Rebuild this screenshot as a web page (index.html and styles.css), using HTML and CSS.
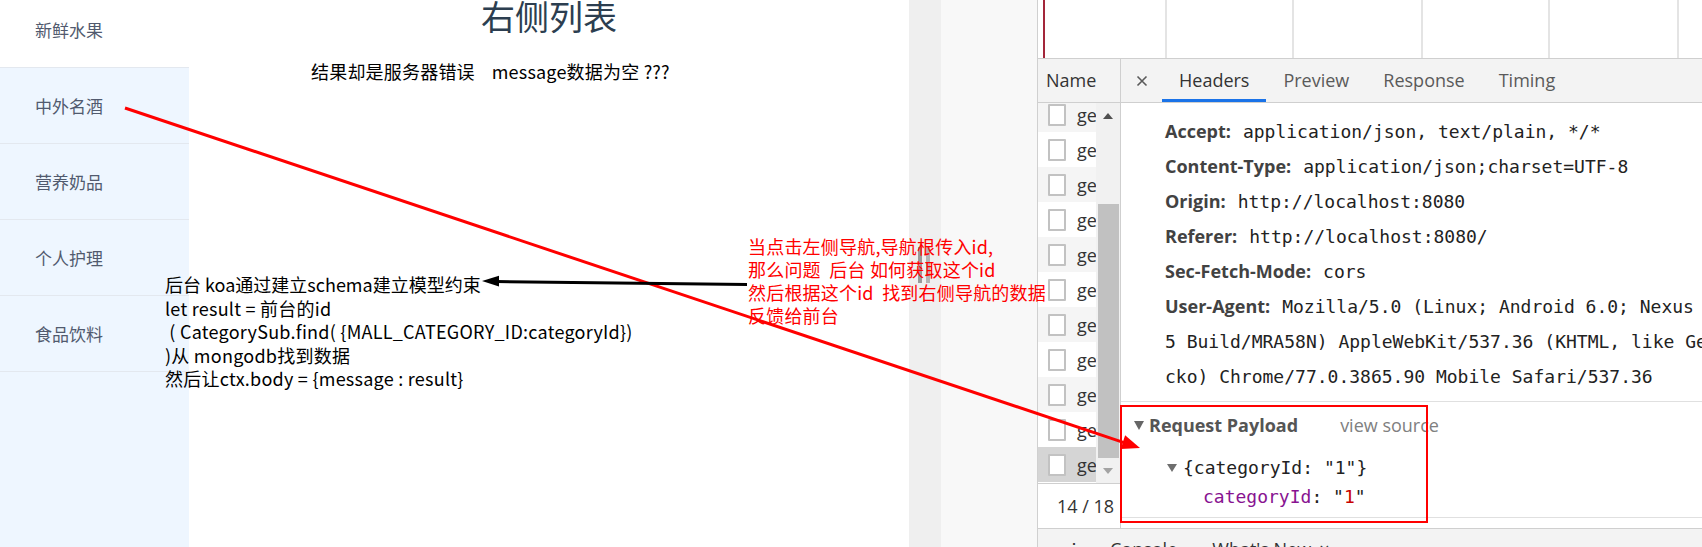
FILE: index.html
```html
<!DOCTYPE html>
<html lang="zh-CN">
<head>
<meta charset="utf-8">
<title>右侧列表</title>
<link rel="stylesheet" href="styles.css">
</head>
<body>
<div class="screen">
  <div class="app">
    <nav class="sidebar">
      <div class="nav-list">
        <div class="nav-item active">新鲜水果</div>
        <div class="nav-item">中外名酒</div>
        <div class="nav-item">营养奶品</div>
        <div class="nav-item">个人护理</div>
        <div class="nav-item">食品饮料</div>
      </div>
    </nav>
    <main class="content">
      <h1 class="title">右侧列表</h1>
      <p class="msg">结果却是服务器错误    message数据为空 ???</p>
    </main>
  </div>

  <div class="gutter">
    <div class="gutter-a"><div class="grip"><span class="grip-bar"></span><span class="grip-bar light"></span></div></div>
    <div class="gutter-b"></div>
  </div>

  <section class="devtools">
    <div class="overview">
      <div class="ov-cell w129"></div>
      <div class="ov-cell w127"></div>
      <div class="ov-cell w129"></div>
      <div class="ov-cell w127"></div>
      <div class="ov-cell w129"></div>
      <div class="marker"></div>
    </div>
    <div class="panel">
      <div class="names">
        <div class="names-head">Name</div>
        <div class="names-body">
          <div class="rows">
            <div class="row alt"><span class="cb"></span><span class="row-name">getCategorySubList</span></div>
            <div class="row"><span class="cb"></span><span class="row-name">getCategorySubList</span></div>
            <div class="row alt"><span class="cb"></span><span class="row-name">getCategorySubList</span></div>
            <div class="row"><span class="cb"></span><span class="row-name">getCategorySubList</span></div>
            <div class="row alt"><span class="cb"></span><span class="row-name">getCategorySubList</span></div>
            <div class="row"><span class="cb"></span><span class="row-name">getCategorySubList</span></div>
            <div class="row alt"><span class="cb"></span><span class="row-name">getCategorySubList</span></div>
            <div class="row"><span class="cb"></span><span class="row-name">getCategorySubList</span></div>
            <div class="row alt"><span class="cb"></span><span class="row-name">getCategorySubList</span></div>
            <div class="row"><span class="cb"></span><span class="row-name">getCategorySubList</span></div>
            <div class="row sel"><span class="cb"></span><span class="row-name">getCategorySubList</span></div>
          </div>
          <div class="scrollbar">
            <div class="sb-btn"><span class="arr-up"></span></div>
            <div class="sb-gap"></div>
            <div class="sb-thumb"></div>
            <div class="sb-btn down"><span class="arr-down"></span></div>
          </div>
        </div>
        <div class="names-status">14 / 18</div>
      </div>
      <div class="details">
        <div class="tabs">
          <div class="tab-close"><svg width="12" height="12" viewBox="0 0 12 12"><path d="M1.5 1.5 L10.5 10.5 M10.5 1.5 L1.5 10.5" stroke="#5a5a5a" stroke-width="1.6" fill="none"/></svg></div>
          <div class="tab active">Headers</div>
          <div class="tab">Preview</div>
          <div class="tab">Response</div>
          <div class="tab">Timing</div>
        </div>
        <div class="headers">
          <div class="hline"><span class="hk">Accept:</span><span class="hv">application/json, text/plain, */*</span></div>
          <div class="hline"><span class="hk">Content-Type:</span><span class="hv">application/json;charset=UTF-8</span></div>
          <div class="hline"><span class="hk">Origin:</span><span class="hv">http://localhost:8080</span></div>
          <div class="hline"><span class="hk">Referer:</span><span class="hv">http://localhost:8080/</span></div>
          <div class="hline"><span class="hk">Sec-Fetch-Mode:</span><span class="hv">cors</span></div>
          <div class="hline"><span class="hk">User-Agent:</span><span class="hv">Mozilla/5.0 (Linux; Android 6.0; Nexus</span></div>
          <div class="hline"><span class="hv cont">5 Build/MRA58N) AppleWebKit/537.36 (KHTML, like Ge</span></div>
          <div class="hline"><span class="hv cont">cko) Chrome/77.0.3865.90 Mobile Safari/537.36</span></div>
        </div>
        <div class="payload">
          <div class="payload-head"><span class="tri"></span><span class="ph-title">Request Payload</span><span class="view-src">view source</span></div>
          <div class="tree">
            <div class="tree-line"><span class="tri small"></span>{categoryId: "1"}</div>
            <div class="tree-line child"><span class="pk">categoryId</span>: "<span class="pv">1</span>"</div>
          </div>
        </div>
      </div>
    </div>
    <div class="drawer"><span class="dr-menu">⋮</span><span class="dr-console">Console</span><span class="dr-new">What's New</span><span class="dr-x">×</span></div>
  </section>

  <div class="annot">
    <svg class="annot-svg" width="1702" height="547" viewBox="0 0 1702 547">
      <line x1="125" y1="108" x2="1124" y2="442.6" stroke="#ff0000" stroke-width="3"/>
      <polygon points="1140,448 1125.1,435.2 1120.7,448.9" fill="#ff0000"/>
      <line x1="747" y1="284.5" x2="496" y2="281.5" stroke="#000" stroke-width="3"/>
      <polygon points="482,281 499,275.8 499,286.4" fill="#000"/>
      <rect x="1121" y="406" width="306" height="116" fill="none" stroke="#ff0000" stroke-width="2"/>
    </svg>
    <div class="note-black"><span class="ls0">后台 koa通过建立schema建立模型约束</span>
let result = 前台的id
 ( CategorySub.find( {MALL_CATEGORY_ID:categoryId})
)从 mongodb找到数据
然后让ctx.body = {message : result}</div>
    <div class="note-red">当点击左侧导航,导航根传入id,
那么问题  后台 如何获取这个id
然后根据这个id  找到右侧导航的数据
反馈给前台</div>
  </div>
</div>
</body>
</html>
```

FILE: styles.css
```css
* { box-sizing: border-box; }
html, body { margin: 0; padding: 0; }
body {
  width: 1702px;
  height: 547px;
  overflow: hidden;
  background: #fff;
  font-family: "Noto Sans CJK SC", "Noto Sans", sans-serif;
}
.screen {
  position: relative;
  display: flex;
  width: 1702px;
  height: 547px;
  overflow: hidden;
}

/* ---------- page ---------- */
.app { display: flex; width: 909px; flex: none; }
.sidebar { width: 189px; flex: none; background: #eef6ff; }
.nav-list { margin-top: -8px; }
.nav-item {
  height: 76px;
  border-bottom: 1px solid #e3e8ef;
  padding-left: 35px;
  display: flex;
  align-items: center;
  font-size: 17px;
  color: #515a6e;
}
.nav-item.active { background: #fff; }
.content { flex: 1; min-width: 0; }
.title {
  margin: -1px 0 0;
  font-size: 34px;
  line-height: 34px;
  font-weight: normal;
  color: #2c3e50;
  text-align: center;
}
.msg {
  margin: 26px 0 0 122px;
  font-size: 18px;
  line-height: 24px;
  letter-spacing: 0.2px;
  color: #000;
  white-space: pre;
}

/* ---------- gutter ---------- */
.gutter { display: flex; width: 128px; flex: none; }
.gutter-a { width: 32px; background: #efefef; padding: 247px 0 0 9px; }
.gutter-b { flex: 1; background: #f8f8f8; }
.grip { display: flex; gap: 4px; }
.grip-bar { width: 4px; height: 36px; background: #9a9a9a; }
.grip-bar.light { background: #b4b4b4; }

/* ---------- devtools ---------- */
.devtools {
  flex: 1;
  min-width: 0;
  border-left: 1px solid #d0d0d0;
  display: flex;
  flex-direction: column;
  overflow: hidden;
  font-family: "Open Sans", "Noto Sans", sans-serif;
}
.overview {
  position: relative;
  flex: none;
  height: 59px;
  display: flex;
  border-bottom: 1px solid #cfcfcf;
  background: #fff;
}
.ov-cell { flex: none; border-right: 2px solid #e4e4e4; }
.w129 { width: 129px; }
.w127 { width: 127px; }
.marker {
  position: absolute;
  left: 5px;
  top: 0;
  bottom: 0;
  width: 2px;
  background: #a3263a;
}
.panel { display: flex; flex: none; height: 469px; }

.names {
  width: 83px;
  flex: none;
  border-right: 1px solid #cfcfcf;
  display: flex;
  flex-direction: column;
}
.names-head {
  height: 44px;
  flex: none;
  background: #f3f3f3;
  border-bottom: 1px solid #cfcfcf;
  padding-left: 8px;
  font-size: 18px;
  line-height: 43px;
  color: #333;
}
.names-body { height: 380px; flex: none; display: flex; overflow: hidden; }
.rows { width: 58px; flex: none; margin-top: -6px; overflow: hidden; }
.row {
  height: 35px;
  display: flex;
  align-items: center;
  padding-left: 10px;
  background: #fff;
  overflow: hidden;
}
.row.alt { background: #f5f5f5; }
.row.sel { background: #d5d5d5; }
.cb {
  width: 18px;
  height: 22px;
  flex: none;
  border: 2px solid #c2c2c2;
  border-radius: 1px;
  background: #fff;
}
.row-name {
  margin-left: 11px;
  font-size: 18px;
  color: #333;
  white-space: nowrap;
}
.scrollbar {
  width: 24px;
  flex: none;
  background: #f1f1f1;
  display: flex;
  flex-direction: column;
}
.sb-btn { height: 26px; flex: none; display: flex; align-items: center; justify-content: center; }
.sb-btn.down { height: 25px; }
.sb-gap { height: 75px; flex: none; }
.sb-thumb { height: 254px; flex: none; margin: 0 1px 0 2px; background: #c1c1c1; }
.arr-up {
  width: 0; height: 0;
  border-left: 5px solid transparent;
  border-right: 5px solid transparent;
  border-bottom: 6px solid #505050;
}
.arr-down {
  width: 0; height: 0;
  border-left: 5px solid transparent;
  border-right: 5px solid transparent;
  border-top: 6px solid #a3a3a3;
}
.names-status {
  height: 45px;
  flex: none;
  border-top: 1px solid #cfcfcf;
  padding-left: 19px;
  font-size: 18px;
  line-height: 44px;
  color: #333;
}

.details { flex: 1; min-width: 0; display: flex; flex-direction: column; overflow: hidden; }
.tabs {
  height: 44px;
  flex: none;
  display: flex;
  background: #f3f3f3;
  border-bottom: 1px solid #cfcfcf;
}
.tab-close { width: 41px; display: flex; align-items: center; justify-content: center; padding-top: 1px; }
.tab {
  padding: 0 17px;
  font-size: 18px;
  line-height: 43px;
  color: #5a5a5a;
}
.tab.active { color: #333; box-shadow: inset 0 -3px 0 #1a73e8; }

.headers {
  height: 299px;
  flex: none;
  padding: 11px 0 0 44px;
  border-bottom: 1px solid #e0e0e0;
}
.hline { height: 35px; line-height: 35px; white-space: nowrap; }
.hk { font-weight: bold; font-size: 18px; color: #424242; }
.hv {
  margin-left: 12px;
  font-family: "DejaVu Sans Mono", "Liberation Mono", monospace;
  font-size: 18px;
  color: #222;
}
.hv.cont { margin-left: 0; }

.payload {
  height: 116px;
  flex: none;
  border-bottom: 1px solid #e0e0e0;
}
.payload-head {
  height: 46px;
  display: flex;
  align-items: center;
  padding-left: 13px;
}
.tri {
  width: 0; height: 0;
  border-left: 5.5px solid transparent;
  border-right: 5.5px solid transparent;
  border-top: 9px solid #666;
  margin-right: 5px;
}
.ph-title { font-weight: bold; font-size: 18px; color: #555; }
.view-src { margin-left: 42px; font-size: 18px; color: #808080; }
.tree { padding: 5px 0 0 46px; }
.tree-line {
  height: 29px;
  display: flex;
  align-items: center;
  white-space: pre;
  font-family: "DejaVu Sans Mono", "Liberation Mono", monospace;
  font-size: 18px;
  color: #222;
}
.tri.small {
  border-left-width: 5px;
  border-right-width: 5px;
  border-top-width: 8px;
  border-top-color: #6e6e6e;
  margin-right: 6px;
}
.tree-line.child { padding-left: 36px; }
.pk { color: #881391; }
.pv { color: #c80000; }

.drawer {
  height: 60px;
  flex: none;
  border-top: 1px solid #cfcfcf;
  background: #f3f3f3;
  padding-left: 27px;
  font-size: 18px;
  line-height: 40px;
  color: #333;
  white-space: nowrap;
}
.dr-console { margin-left: 27px; }
.dr-new { margin-left: 35px; }
.dr-x { margin-left: 8px; }

/* ---------- annotations ---------- */
.annot { position: absolute; left: 0; top: 0; width: 1702px; height: 547px; pointer-events: none; }
.annot-svg { position: absolute; left: 0; top: 0; }
.note-black {
  position: absolute;
  left: 165px;
  top: 273px;
  font-size: 18px;
  line-height: 23.5px;
  letter-spacing: 0.25px;
  color: #000;
  white-space: pre;
}
.note-black .ls0 { letter-spacing: 0; }
.note-red {
  position: absolute;
  left: 748px;
  top: 234.5px;
  font-size: 18px;
  line-height: 23px;
  letter-spacing: 0.2px;
  color: #ff0000;
  white-space: pre;
}
```
